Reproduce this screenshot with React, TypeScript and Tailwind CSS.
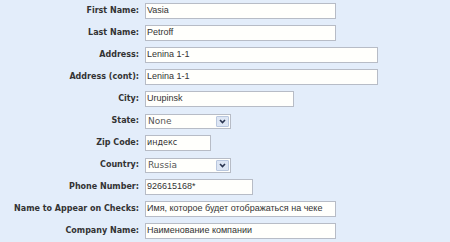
import React from 'react';

type Field =
  | { label: string; kind: 'input'; value: string; width: string; small?: boolean }
  | { label: string; kind: 'select'; value: string; width: string };

const FIELDS: Field[] = [
  { label: 'First Name:', kind: 'input', value: 'Vasia', width: 'w-[191px]' },
  { label: 'Last Name:', kind: 'input', value: 'Petroff', width: 'w-[191px]' },
  { label: 'Address:', kind: 'input', value: 'Lenina 1-1', width: 'w-[233px]' },
  { label: 'Address (cont):', kind: 'input', value: 'Lenina 1-1', width: 'w-[233px]' },
  { label: 'City:', kind: 'input', value: 'Urupinsk', width: 'w-[149px]' },
  { label: 'State:', kind: 'select', value: 'None', width: 'w-[86px]' },
  { label: 'Zip Code:', kind: 'input', value: 'индекс', width: 'w-[66px]', small: true },
  { label: 'Country:', kind: 'select', value: 'Russia', width: 'w-[86px]' },
  { label: 'Phone Number:', kind: 'input', value: '926615168*', width: 'w-[108px]' },
  { label: 'Name to Appear on Checks:', kind: 'input', value: 'Имя, которое будет отображаться на чеке', width: 'w-[191px]' },
  { label: 'Company Name:', kind: 'input', value: 'Наименование компании', width: 'w-[191px]' },
];

function SelectBox({ value, width }: { value: string; width: string }) {
  return (
    <div className={`${width} h-[15px] flex items-center justify-between border border-[#b7bcc6] bg-[#fffffc] pl-[2px] pr-[1px]`}>
      <span className="text-[9px] leading-none text-[#555] font-['DejaVu_Sans',sans-serif]">{value}</span>
      <span className="w-[13px] h-[11px] flex items-center justify-center bg-[#dde6f4] border border-[#b9c7de] rounded-[1px]">
        <svg width="7" height="5" viewBox="0 0 7 5">
          <path d="M1 1 L3.5 3.5 L6 1" fill="none" stroke="#2a3550" strokeWidth="1.6" />
        </svg>
      </span>
    </div>
  );
}

export default function App() {
  return (
    <div className="w-[450px] h-[242px] bg-[#e3edfa] overflow-hidden">
      <div className="grid grid-cols-[139px_auto] gap-x-[6px] justify-start">
        {FIELDS.map((f) => (
          <React.Fragment key={f.label}>
            <div className="h-[22px] flex items-center justify-end text-[8px] font-bold text-[#333] font-['DejaVu_Sans',sans-serif] whitespace-nowrap">
              {f.label}
            </div>
            <div className="h-[22px] flex items-center">
              {f.kind === 'select' ? (
                <SelectBox value={f.value} width={f.width} />
              ) : (
                <div
                  className={`${f.width} h-[16px] flex items-center border border-[#b7bcc6] bg-[#fffffc] px-[1px] text-[#333] whitespace-nowrap overflow-hidden ${
                    f.small
                      ? "text-[8px] font-['DejaVu_Sans',sans-serif]"
                      : "text-[9px] font-['Liberation_Sans',Arial,sans-serif]"
                  }`}
                >
                  {f.value}
                </div>
              )}
            </div>
          </React.Fragment>
        ))}
      </div>
    </div>
  );
}
